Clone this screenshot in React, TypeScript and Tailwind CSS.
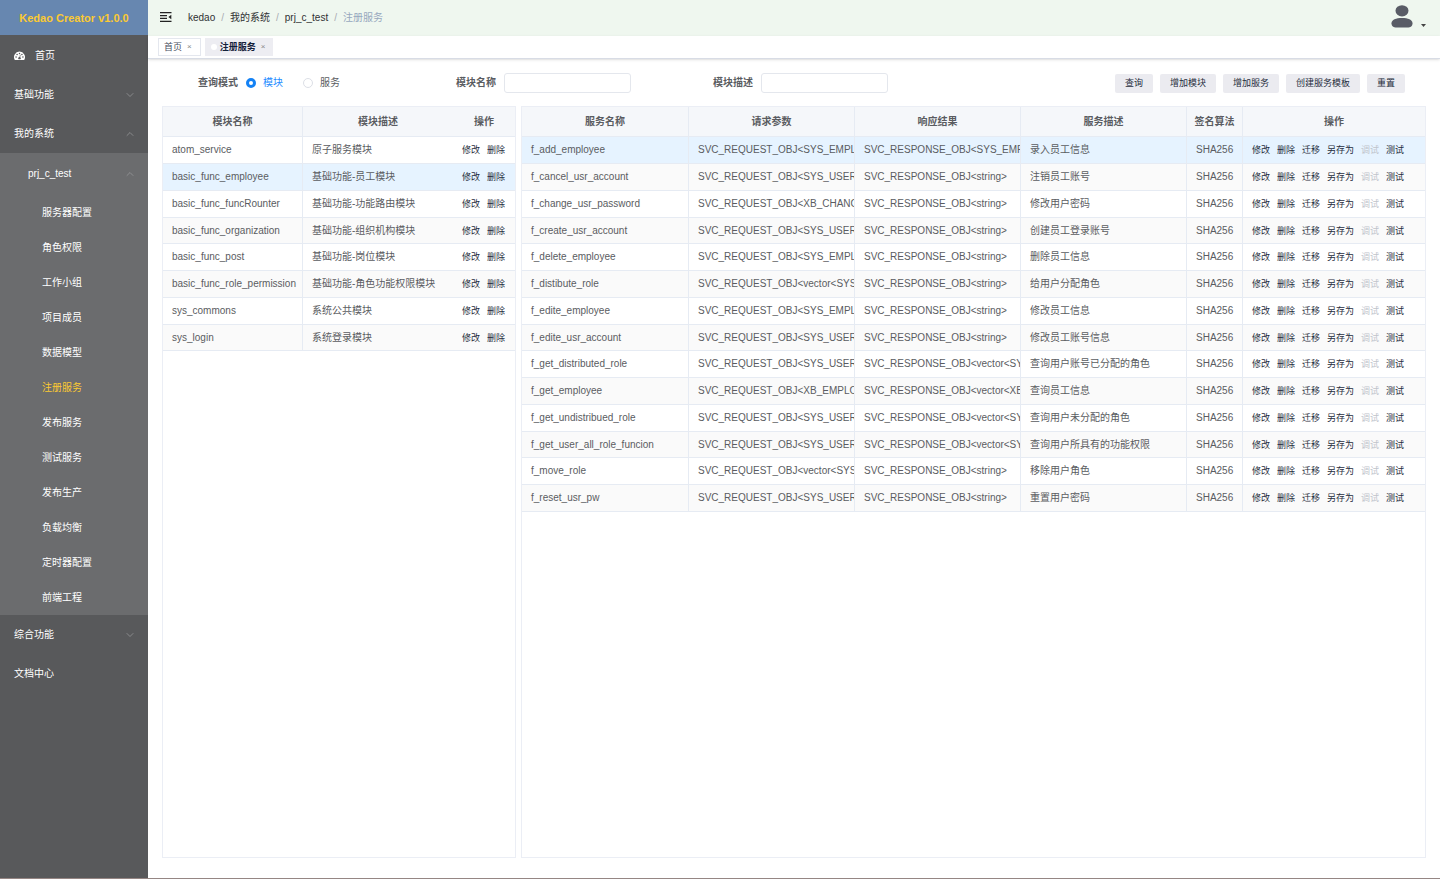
import { clsx } from "clsx";
import { ChevronDown, ChevronUp } from "lucide-react";

const modules = [
  ["atom_service", "原子服务模块"],
  ["basic_func_employee", "基础功能-员工模块"],
  ["basic_func_funcRounter", "基础功能-功能路由模块"],
  ["basic_func_organization", "基础功能-组织机构模块"],
  ["basic_func_post", "基础功能-岗位模块"],
  ["basic_func_role_permission", "基础功能-角色功能权限模块"],
  ["sys_commons", "系统公共模块"],
  ["sys_login", "系统登录模块"],
];

const services = [
  ["f_add_employee", "SYS_EMPLO", "SYS_EMP", "录入员工信息"],
  ["f_cancel_usr_account", "SYS_USER", "string>", "注销员工账号"],
  ["f_change_usr_password", "XB_CHANG", "string>", "修改用户密码"],
  ["f_create_usr_account", "SYS_USER", "string>", "创建员工登录账号"],
  ["f_delete_employee", "SYS_EMPLO", "string>", "删除员工信息"],
  ["f_distibute_role", "vector<SYS_", "string>", "给用户分配角色"],
  ["f_edite_employee", "SYS_EMPLO", "string>", "修改员工信息"],
  ["f_edite_usr_account", "SYS_USER", "string>", "修改员工账号信息"],
  ["f_get_distributed_role", "SYS_USER_", "vector<SYS", "查询用户账号已分配的角色"],
  ["f_get_employee", "XB_EMPLO", "vector<XB", "查询员工信息"],
  ["f_get_undistribued_role", "SYS_USER_", "vector<SYS", "查询用户未分配的角色"],
  ["f_get_user_all_role_funcion", "SYS_USER", "vector<SY", "查询用户所具有的功能权限"],
  ["f_move_role", "vector<SYS_", "string>", "移除用户角色"],
  ["f_reset_usr_pw", "SYS_USER", "string>", "重置用户密码"],
];

const subMenus = [
  "服务器配置",
  "角色权限",
  "工作小组",
  "项目成员",
  "数据模型",
  "注册服务",
  "发布服务",
  "测试服务",
  "发布生产",
  "负载均衡",
  "定时器配置",
  "前端工程",
];

const toolbar = ["查询", "增加模块", "增加服务", "创建服务模板", "重置"];

const cell =
  "border-r border-b border-[#e6ebf3] pl-[9px] overflow-hidden whitespace-nowrap";
const headCell = "border-r border-b border-[#e6ebf3] bg-[#f5f7fa] font-bold";

function DashboardIcon() {
  return (
    <svg viewBox="0 0 20 18" className="w-[11px]" aria-hidden="true">
      <path
        d="M10 1A10 10 0 0 0 1.6 16.4Q2 17 2.8 17H17.2Q18 17 18.4 16.4A10 10 0 0 0 10 1Z"
        fill="#fff"
      />
      <g fill="#58595b">
        <circle cx="3.8" cy="11" r="1.4" />
        <circle cx="5.6" cy="6.4" r="1.4" />
        <circle cx="10" cy="4.4" r="1.4" />
        <circle cx="14.4" cy="6.4" r="1.4" />
        <circle cx="16.2" cy="11" r="1.4" />
        <circle cx="10" cy="13" r="2.2" />
      </g>
      <path d="M10 13 11.6 7" stroke="#58595b" strokeWidth="1.2" />
    </svg>
  );
}

function FoldIcon() {
  return (
    <svg viewBox="0 0 12 10" className="w-3 h-[10px]" aria-hidden="true">
      <path
        d="M0 .7H11.5M0 3.6H7M0 6.4H7M0 9.3H11.5"
        stroke="#222"
        strokeWidth="1.2"
      />
      <path d="M11.3 2.8V7.2L8.4 5Z" fill="#222" />
    </svg>
  );
}

function UserIcon() {
  return (
    <svg viewBox="0 0 22 24" className="w-[22px] h-6" aria-hidden="true">
      <g fill="#595c66">
        <ellipse cx="11" cy="5.8" rx="6.5" ry="5.6" />
        <path d="M.5 18.2C.5 14.6 5 12.9 11 12.9S21.5 14.6 21.5 18.2C21.5 21.4 19.5 22.4 16.5 22.4H5.5C2.5 22.4.5 21.4.5 18.2Z" />
      </g>
    </svg>
  );
}

function MenuArrow({ open }: { open: boolean }) {
  const Icon = open ? ChevronUp : ChevronDown;
  return <Icon className="size-3 text-[#98999b]" strokeWidth={1.5} />;
}

function MenuItem({ label, open }: { label: string; open?: boolean }) {
  return (
    <button className="flex h-[39px] w-full items-center justify-between pr-3 pl-[14px]">
      {label}
      {open !== undefined && <MenuArrow open={open} />}
    </button>
  );
}

function Sidebar() {
  return (
    <aside className="flex w-[148px] shrink-0 flex-col bg-[#58595b] text-white">
      <h1 className="flex h-[35px] items-center justify-center bg-[#6787b0] text-[11px] font-bold text-[#fbca32]">
        Kedao Creator v1.0.0
      </h1>
      <nav className="pt-px">
        <button className="flex h-[39px] w-full items-center gap-[10px] px-[14px]">
          <DashboardIcon />
          首页
        </button>
        <MenuItem label="基础功能" open={false} />
        <MenuItem label="我的系统" open />
        <div className="bg-[#6b6c6e]">
          <button className="flex h-[42px] w-full items-center justify-between pr-3 pl-7">
            prj_c_test
            <MenuArrow open />
          </button>
          {subMenus.map((name) => (
            <a
              key={name}
              href="#"
              className={clsx(
                "flex h-[35px] items-center pl-[42px]",
                name === "注册服务" && "text-[#fbca32]",
              )}
            >
              {name}
            </a>
          ))}
        </div>
        <MenuItem label="综合功能" open={false} />
        <MenuItem label="文档中心" />
      </nav>
    </aside>
  );
}

function Header() {
  return (
    <header className="flex h-9 shrink-0 items-center bg-[#eff7ef] pr-[14px] pl-3 text-[#303133]">
      <button aria-label="收起菜单" className="mb-0.5">
        <FoldIcon />
      </button>
      <nav className="ml-4 flex items-center gap-[6px]">
        <a href="#">kedao</a>
        <span className="text-[#a8abb2]">/</span>
        <a href="#">我的系统</a>
        <span className="text-[#a8abb2]">/</span>
        <a href="#">prj_c_test</a>
        <span className="text-[#a8abb2]">/</span>
        <span className="text-[#97a8be]">注册服务</span>
      </nav>
      <button aria-label="用户菜单" className="mb-0.5 ml-auto flex items-end gap-2">
        <UserIcon />
        <svg viewBox="0 0 5 3" className="mb-0.5 w-[5px]" aria-hidden="true">
          <path d="M0 0H5L2.5 3Z" fill="#444" />
        </svg>
      </button>
    </header>
  );
}

function TagsView() {
  return (
    <div className="flex h-[23px] shrink-0 items-center gap-1 border-b border-[#d8dce5] bg-white pl-[10px] text-[9px] shadow-sm">
      <a
        href="#"
        className="flex h-[18px] items-center gap-[5px] border border-[#e4e7ee] pr-2 pl-[5px] text-[#495060]"
      >
        首页 <span className="text-[8px] text-[#888]">×</span>
      </a>
      <a
        href="#"
        className="flex h-[18px] items-center gap-[5px] bg-[#ededf2] pr-2 pl-[6px] font-bold text-[#14213a]"
      >
        <span className="-mr-0.5 size-[6px] rounded-full bg-white" />
        注册服务 <span className="text-[8px] font-normal text-[#888]">×</span>
      </a>
    </div>
  );
}

function SearchForm() {
  const input =
    "h-5 w-[127px] rounded-[3px] border border-[#e4e7ed] bg-white px-2 outline-none";
  const radio =
    "size-[10px] appearance-none rounded-full border border-[#dcdfe6] bg-white checked:border-[3px] checked:border-[#1482f5]";

  return (
    <form className="grid grid-cols-[258fr_257fr_175fr_517fr] items-center pr-[21px] pl-9">
      <div role="radiogroup" aria-labelledby="mode" className="flex items-center">
        <span id="mode" className="font-bold">
          查询模式
        </span>
        <label className="ml-2 flex items-center gap-[7px] text-[#1e8cff]">
          <input type="radio" name="mode" defaultChecked className={radio} />
          模块
        </label>
        <label className="ml-5 flex items-center gap-[7px]">
          <input type="radio" name="mode" className={radio} />
          服务
        </label>
      </div>
      <div className="flex items-center gap-2">
        <label htmlFor="module-name" className="font-bold">
          模块名称
        </label>
        <input id="module-name" type="text" className={input} />
      </div>
      <div className="flex items-center gap-2">
        <label htmlFor="module-desc" className="font-bold">
          模块描述
        </label>
        <input id="module-desc" type="text" className={input} />
      </div>
      <div className="flex justify-end gap-[7px]">
        {toolbar.map((name) => (
          <button
            key={name}
            type="button"
            className="h-[19px] rounded-[2px] bg-[#ebebf0] px-[10px] text-[9px] whitespace-nowrap text-[#1f2d3d]"
          >
            {name}
          </button>
        ))}
      </div>
    </form>
  );
}

function Actions({ names }: { names: string[] }) {
  return (
    <div className="flex gap-[7px] text-[9px] text-[#1f2d3d]">
      {names.map((name) => (
        <button
          key={name}
          disabled={name === "调试"}
          className="whitespace-nowrap disabled:text-[#c0c4cc]"
        >
          {name}
        </button>
      ))}
    </div>
  );
}

function rowStyle(index: number, current: number) {
  return clsx(
    "h-[27px] nth-[4n]:h-[26px]",
    index === current ? "bg-[#e6f3ff]" : index % 2 ? "bg-[#fafafa]" : "bg-white",
  );
}

function ModuleTable() {
  return (
    <section className="overflow-hidden border border-[#ebeef5]">
      <table className="w-full table-fixed border-separate border-spacing-0">
        <thead>
          <tr className="h-[30px]">
            <th className={clsx(headCell, "w-[140px]")}>模块名称</th>
            <th className={clsx(headCell, "w-[150px] border-r-0")}>模块描述</th>
            <th className={clsx(headCell, "w-[62px] border-r-0")}>操作</th>
          </tr>
        </thead>
        <tbody>
          {modules.map(([name, desc], i) => (
            <tr key={name} className={rowStyle(i, 1)}>
              <td className={cell}>{name}</td>
              <td className={clsx(cell, "border-r-0")}>{desc}</td>
              <td className={clsx(cell, "border-r-0")}>
                <Actions names={["修改", "删除"]} />
              </td>
            </tr>
          ))}
        </tbody>
      </table>
    </section>
  );
}

function ServiceTable() {
  return (
    <section className="overflow-hidden border border-[#ebeef5]">
      <table className="w-full table-fixed border-separate border-spacing-0">
        <thead>
          <tr className="h-[30px]">
            <th className={clsx(headCell, "w-[167px]")}>服务名称</th>
            <th className={clsx(headCell, "w-[166px]")}>请求参数</th>
            <th className={clsx(headCell, "w-[166px]")}>响应结果</th>
            <th className={clsx(headCell, "w-[166px]")}>服务描述</th>
            <th className={clsx(headCell, "w-[56px]")}>签名算法</th>
            <th className={clsx(headCell, "w-[182px] border-r-0")}>操作</th>
          </tr>
        </thead>
        <tbody>
          {services.map(([name, request, response, desc], i) => (
            <tr key={name} className={rowStyle(i, 0)}>
              <td className={cell}>{name}</td>
              <td className={cell}>SVC_REQUEST_OBJ&lt;{request}</td>
              <td className={cell}>SVC_RESPONSE_OBJ&lt;{response}</td>
              <td className={cell}>{desc}</td>
              <td className={cell}>SHA256</td>
              <td className={clsx(cell, "border-r-0")}>
                <Actions
                  names={["修改", "删除", "迁移", "另存为", "调试", "测试"]}
                />
              </td>
            </tr>
          ))}
        </tbody>
      </table>
    </section>
  );
}

export default function App() {
  return (
    <div className="flex min-h-screen border-b border-[#958684] bg-white font-['Liberation_Sans','Noto_Sans_CJK_SC',sans-serif] text-[10px] leading-4 text-[#5a5c61]">
      <Sidebar />
      <div className="flex min-w-0 flex-1 flex-col">
        <Header />
        <TagsView />
        <main className="flex flex-1 flex-col gap-[13px] px-[14px] pt-[14px] pb-5">
          <SearchForm />
          <div className="grid flex-1 grid-cols-[354fr_905fr] gap-[5px]">
            <ModuleTable />
            <ServiceTable />
          </div>
        </main>
      </div>
    </div>
  );
}
